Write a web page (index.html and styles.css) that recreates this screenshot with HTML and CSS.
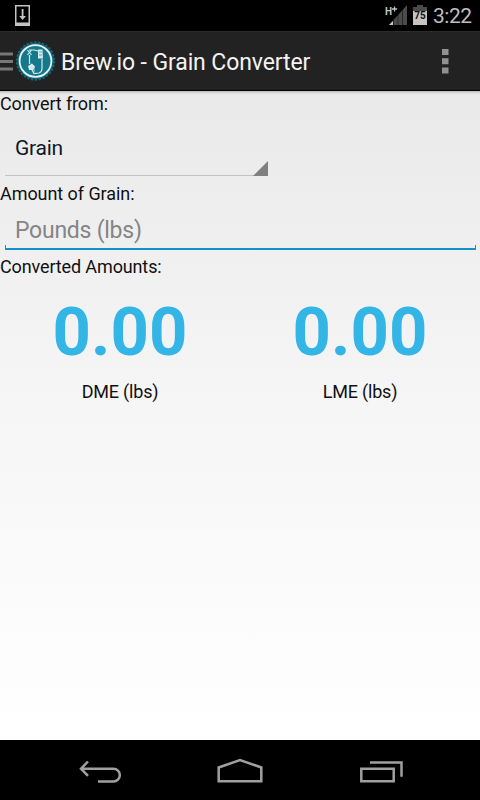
FILE: index.html
```html
<!DOCTYPE html>
<html lang="en">
<head>
<meta charset="utf-8">
<title>Brew.io - Grain Converter</title>
<link rel="stylesheet" href="styles.css">
</head>
<body>
<div class="screen">
  <header class="status">
    <svg class="download" width="15" height="21" viewBox="0 0 15 21"><path fill="#c4c4c4" fill-rule="evenodd" d="M0 0h15v21H0zM1.500 1.500v16h12v-16z"/><path fill="#c4c4c4" d="M6.700 4h1.800v7h2.500l-3.400 4-3.400-4h2.500z"/></svg>
    <svg class="signal" width="23" height="22" viewBox="0 0 23 22"><path fill="#4b4b4b" d="M22 1v20H4z"/><path fill="#c4c4c4" d="M4 21l4-4v4z"/><path stroke="#000" stroke-opacity=".45" d="M8.500 21v-6M13 21V10M17.500 21V5"/><text x="0" y="10.500" class="network">H</text><path stroke="#c4c4c4" stroke-width="1.300" d="M7 5h5M9.500 2.500v5"/></svg>
    <svg class="battery" width="14" height="20" viewBox="0 0 14 20"><path fill="#4b4b4b" d="M4 0h6v2h4v4H0V2h4z"/><path fill="#c4c4c4" d="M0 6h14v14H0z"/><text x="7" y="14" class="charge">75</text></svg>
    <span class="time">3:22</span>
  </header>
  <div class="appbar">
    <svg class="brand" width="56" height="42" viewBox="0 0 56 42">
      <path fill="#777" d="M0 12.500h13v3H0zM0 20h13v3H0zM0 27.500h13v3H0z"/>
      <circle cx="35.500" cy="21" r="18.300" fill="#136579"/>
      <circle cx="35.500" cy="21" r="18.700" fill="none" stroke="#136579" stroke-width="2" stroke-dasharray="2.400 1.516"/>
      <circle cx="35.500" cy="21" r="15.900" fill="#15798c" stroke="#e8f2f4" stroke-width="1.800"/>
      <g fill="none" stroke="#d5e8eb" stroke-width="1.200"><path d="M27.500 10l4 5m0-5l-4 5M29 10h5l4 1M29.500 15v9M42 19v9q0 4-3 5l-5 .5-2-3.500"/><path stroke-width=".8" d="M34 32v-6l-3-2"/></g>
      <path fill="#d5e8eb" d="M38 9.500h4.500l.5 9h-5zM28 26l4-2.500 3 3-2 3.500h-4z"/>
      <path stroke="#15798c" stroke-width=".6" d="M39 12h3M39 15h3"/>
    </svg>
    <h1>Brew.io - Grain Converter</h1>
    <svg class="more" width="7" height="27" viewBox="0 0 7 27"><path fill="#919191" d="M0 1h6.500v6H0zM0 10.300h6.500v6H0zM0 19.600h6.500v6H0z"/></svg>
  </div>
  <main>
    <div class="label from">Convert from:</div>
    <div class="spinner"><span>Grain</span><svg class="corner" width="15" height="15" viewBox="0 0 15 15"><path fill="#808080" d="M15 0v15H0z"/></svg></div>
    <div class="label amount">Amount of Grain:</div>
    <div class="field"><span>Pounds (lbs)</span></div>
    <div class="label converted">Converted Amounts:</div>
    <section class="results">
      <div class="result"><strong>0.00</strong><span>DME (lbs)</span></div>
      <div class="result"><strong>0.00</strong><span>LME (lbs)</span></div>
    </section>
  </main>
  <nav>
    <svg width="480" height="60" viewBox="0 0 480 60" fill="none" stroke="#a0a0a0" stroke-width="2.500">
      <path d="M81 28.700h32.500a6.300 6.300 0 0 1 0 12.700H98M88 21.500l-7 7.200 7 7.200"/>
      <path d="M218.700 41.300V27.500L240 20l21.300 7.500v13.800z"/>
      <path d="M361.300 28.700h32.400v12.600h-32.400zM370 22.400h31.500v14.300"/>
    </svg>
  </nav>
</div>
</body>
</html>
```
FILE: styles.css
```css
* { box-sizing: border-box; }
body { margin: 0; font-family: Roboto, sans-serif; }
svg { display: block; flex: none; }
.screen { width: 480px; height: 800px; display: flex; flex-direction: column; overflow: hidden; background: #000; }
.status { height: 31px; display: flex; align-items: flex-start; padding-left: 15px; color: #bdbdbd; }
.download { margin-top: 5px; }
.signal { margin: 4px 0 0 355px; }
.network { font: bold 10px Roboto, sans-serif; fill: #c4c4c4; }
.battery { margin: 5px 0 0 5px; }
.charge { font: bold 10px Roboto, sans-serif; fill: #111; text-anchor: middle; }
.time { margin: 4px 0 0 6px; font-size: 21px; line-height: 25px; letter-spacing: -0.5px; white-space: nowrap; }
.appbar { height: 60px; display: flex; align-items: center; background: #222; border-top: 1px solid #2c2c2c; border-bottom: 1px solid #000; color: #f3f3f3; }
.appbar h1 { margin: 0 0 0 5px; padding-top: 3px; width: 376px; font-size: 23px; font-weight: 400; line-height: 30px; letter-spacing: -0.11px; white-space: nowrap; }
.more { margin-left: 5px; }
main { height: 649px; display: flex; flex-direction: column; background: linear-gradient(#bbb, transparent) top / 100% 3px no-repeat, linear-gradient(#e9e9e9, #f5f5f5 45%, #fff); color: #111; }
.label { font-size: 18px; line-height: 22px; letter-spacing: -0.13px; white-space: nowrap; }
.from { margin-top: 2px; }
.spinner { width: 263px; height: 61px; margin-left: 5px; padding: 20px 0 0 10px; display: flex; justify-content: space-between; background: linear-gradient(#c2c2c2, #c2c2c2) bottom / 100% 1px no-repeat; color: #111827; font-size: 21px; line-height: 26px; letter-spacing: -0.25px; }
.corner { margin-top: 26px; }
.amount { margin-top: 7px; letter-spacing: -0.06px; }
.field { width: 471px; height: 45px; margin-left: 5px; padding: 11px 10px 0; color: #858585; font-size: 23px; line-height: 30px; letter-spacing: -0.25px; background: linear-gradient(#178fca, #178fca) left bottom / 1px 5px no-repeat, linear-gradient(#178fca, #178fca) right bottom / 1px 5px no-repeat, linear-gradient(#178fca, #178fca) left bottom / 100% 2px no-repeat; }
.converted { margin-top: 6px; }
.results { display: grid; grid-template-columns: 1fr 1fr; margin-top: 14px; }
.result { display: flex; flex-direction: column; align-items: center; font-size: 18px; line-height: 22px; letter-spacing: -0.2px; }
.result strong { color: #33b5e5; font-size: 67px; line-height: 80px; letter-spacing: 0; }
.result span { margin-top: 9px; }
nav { height: 60px; background: #000; }
```
